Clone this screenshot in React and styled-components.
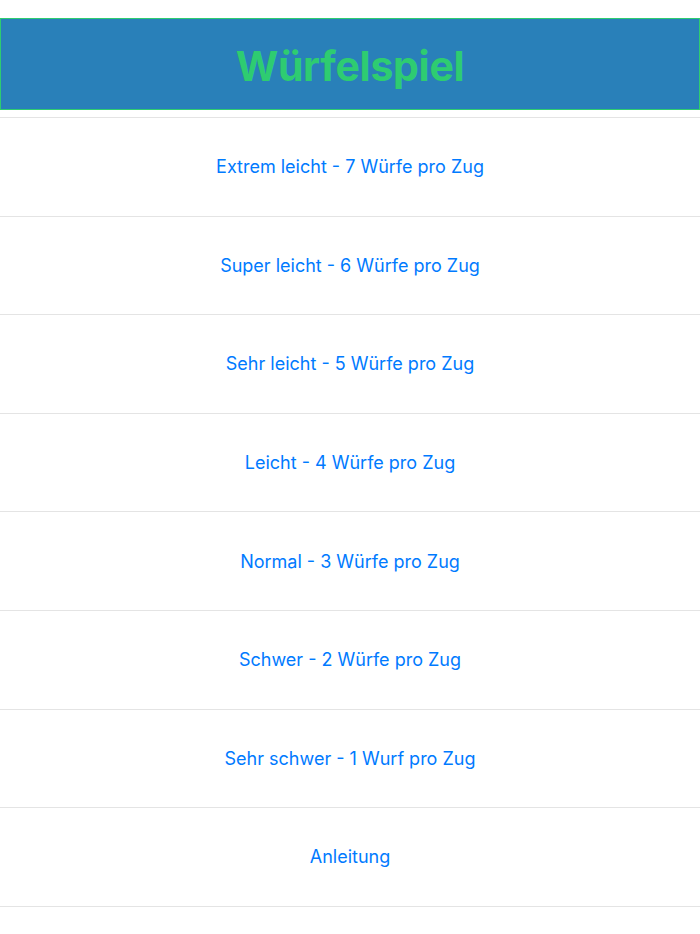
import styled, { createGlobalStyle } from 'styled-components'

const levels = [
    "Extrem leicht - 7 Würfe pro Zug",
    "Super leicht - 6 Würfe pro Zug",
    "Sehr leicht - 5 Würfe pro Zug",
    "Leicht - 4 Würfe pro Zug",
    "Normal - 3 Würfe pro Zug",
    "Schwer - 2 Würfe pro Zug",
    "Sehr schwer - 1 Wurf pro Zug",
    "Anleitung",
]

const GlobalStyle = createGlobalStyle`
    body {
        margin: 0;
        background: #ffffff;
        font-family: Inter, "Noto Sans", sans-serif;
    }
`

const StyledPage = styled.div`
    display: flex;
    flex-direction: column;
    padding-top: 18px;
    width: 100%;
`

const StyledHeader = styled.div`
    display: flex;
    justify-content: center;
    align-items: center;
    box-sizing: border-box;
    height: 92px;
    padding-top: 4px;
    background-color: #2980b9;
    border: 1px solid #2ecc71;

    h1 {
        margin: 0;
        color: #2ecc71;
        font-size: 41px;
        font-weight: 700;
        letter-spacing: -0.3px;
    }
`

const StyledList = styled.div`
    display: flex;
    flex-direction: column;
    margin-top: 7px;
    border-bottom: 1px solid #e4e4e4;
`

const StyledRow = styled.button`
    display: flex;
    justify-content: center;
    align-items: center;
    height: 98.6px;
    border: none;
    border-top: 1px solid #e4e4e4;
    background: transparent;
    color: #007aff;
    font-family: Inter, "Noto Sans", sans-serif;
    font-size: 18px;
    cursor: pointer;
    padding: 0;
`

export default function App() {
    return (
        <StyledPage>
            <GlobalStyle/>
            <StyledHeader>
                <h1>Würfelspiel</h1>
            </StyledHeader>
            <StyledList>
                {levels.map((label, i) =>
                    <StyledRow key={i}>{label}</StyledRow>
                )}
            </StyledList>
        </StyledPage>
    )
}
